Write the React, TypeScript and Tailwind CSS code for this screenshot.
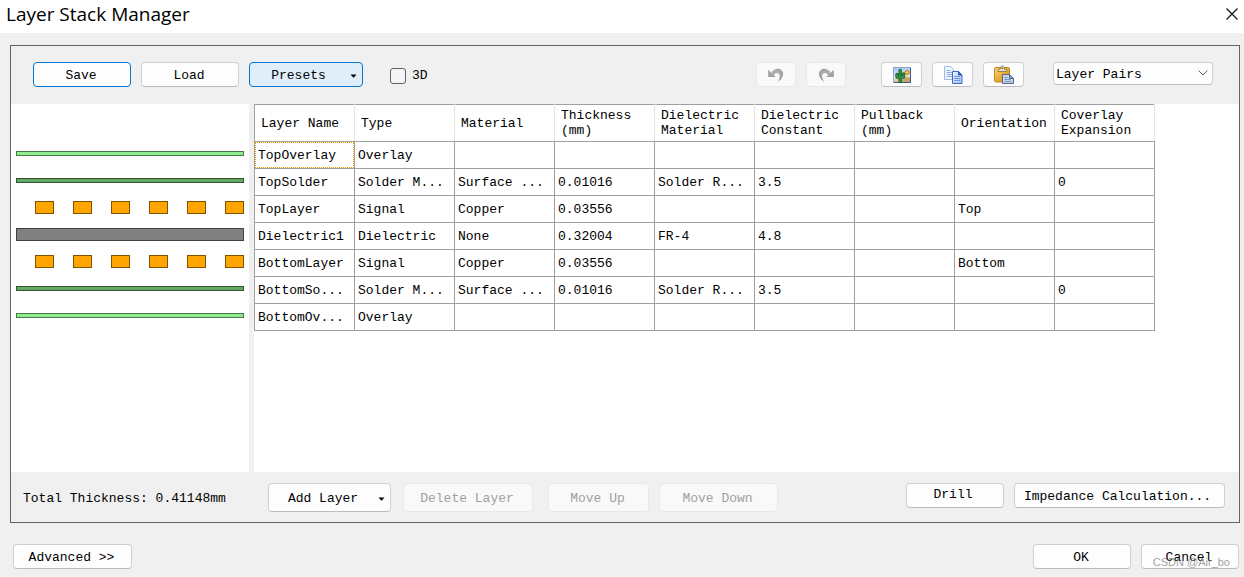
import type { ButtonHTMLAttributes } from 'react';
import { clsx } from 'clsx';

const columns = [
  'Layer Name',
  'Type',
  'Material',
  'Thickness (mm)',
  'Dielectric Material',
  'Dielectric Constant',
  'Pullback (mm)',
  'Orientation',
  'Coverlay Expansion',
];

const layers = [
  { kind: 'overlay', cells: ['TopOverlay', 'Overlay', '', '', '', '', '', '', ''] },
  { kind: 'solder', cells: ['TopSolder', 'Solder M...', 'Surface ...', '0.01016', 'Solder R...', '3.5', '', '', '0'] },
  { kind: 'signal', cells: ['TopLayer', 'Signal', 'Copper', '0.03556', '', '', '', 'Top', ''] },
  { kind: 'dielectric', cells: ['Dielectric1', 'Dielectric', 'None', '0.32004', 'FR-4', '4.8', '', '', ''] },
  { kind: 'signal', cells: ['BottomLayer', 'Signal', 'Copper', '0.03556', '', '', '', 'Bottom', ''] },
  { kind: 'solder', cells: ['BottomSo...', 'Solder M...', 'Surface ...', '0.01016', 'Solder R...', '3.5', '', '', '0'] },
  { kind: 'overlay', cells: ['BottomOv...', 'Overlay', '', '', '', '', '', '', ''] },
];

const tones = {
  plain: 'border-x-[#d0d0d0] border-t-[#d0d0d0] border-b-[#bcbcbc] bg-[#fdfdfd]',
  focused: 'border-[#0078d4] bg-[#fdfdfd]',
  active: 'border-[#0078d4] bg-[#e0eef9]',
  off: 'border-[#e8e8e8] bg-[#f9f9f9] text-[#a0a0a0]',
};

type ButtonProps = ButtonHTMLAttributes<HTMLButtonElement> & { tone?: keyof typeof tones };

function Button({ className, tone = 'plain', ...props }: ButtonProps) {
  return (
    <button
      type="button"
      disabled={tone === 'off'}
      className={clsx('flex shrink-0 items-center justify-center whitespace-nowrap rounded border', tones[tone], className)}
      {...props}
    />
  );
}

function Caret() {
  return (
    <svg className="h-1 w-[7px] shrink-0" viewBox="0 0 7 4" aria-hidden="true">
      <path d="M0.5 0.5h6L3.5 3.8z" fill="#000" />
    </svg>
  );
}

function UndoIcon({ flipped }: { flipped?: boolean }) {
  return (
    <svg className={clsx('h-5 w-5', flipped && '-scale-x-100')} viewBox="0 0 20 20" aria-hidden="true">
      <path d="M2.200 4.800v7.200h7.600z" fill="#a0a0a0" />
      <path
        d="M5 8.800C7.500 5.200 11.500 3.600 14.400 5c3.800 1.900 3.300 7.500-2.700 12.300 2.200-4 2.700-7.300.9-8.700-1.400-1.100-3.400-.5-4.900 1.700z"
        fill="#acacac"
      />
      <path d="M6 7.300c3-3.200 6.700-3.800 9-1.900 2.300 2.300 1.500 6.500-1.300 9.600" fill="none" stroke="#8f8f8f" />
    </svg>
  );
}

function PictureIcon() {
  return (
    <svg className="h-5 w-5" viewBox="0 0 20 20" aria-hidden="true">
      <defs>
        <linearGradient id="sky" x1="0" y1="0" x2="0" y2="1">
          <stop offset="0" stopColor="#a9c9ee" />
          <stop offset="1" stopColor="#f4f9fe" />
        </linearGradient>
      </defs>
      <rect x="1.500" y="2.500" width="17" height="15" fill="url(#sky)" stroke="#8ba7cb" />
      <path d="M2 14.500c3-2 5-1.500 7-1 3-2.500 6-3 9-1.500v5H2z" fill="#e2c894" />
      <path d="M10 14.500c2.500-2 5-2.500 8-1.500v4H9z" fill="#c4a36a" />
      <path d="M18.500 3v14.500H2" fill="none" stroke="#3e5a85" />
      <circle cx="15" cy="7.500" r="2" fill="#ffc431" stroke="#b77914" />
      <path d="M8.200 5.500v11M5 9.500v2.500h6.500V9" fill="none" stroke="#1d6535" strokeWidth="3.400" strokeLinecap="round" strokeLinejoin="round" />
      <path d="M8.200 5.500v11M5 9.500v2.500h6.500V9" fill="none" stroke="#2f8c45" strokeWidth="1.800" strokeLinecap="round" strokeLinejoin="round" />
    </svg>
  );
}

function CopyIcon() {
  return (
    <svg className="h-5 w-5" viewBox="0 0 20 20" aria-hidden="true">
      <defs>
        <linearGradient id="sheet" x1="0" y1="0" x2="1" y2="1">
          <stop offset="0" stopColor="#f0f6ff" />
          <stop offset="1" stopColor="#9dbff2" />
        </linearGradient>
      </defs>
      <path d="M1.500 1.500h6l3 3v10h-9z" fill="#eef4fd" stroke="#a3bbe2" />
      <path d="M3.500 5.500h4M3.500 7.500h6M3.500 9.500h6M3.500 11.500h6" fill="none" stroke="#8fb2e6" />
      <path d="M9.500 6.500h6l3.500 3.500v8.500H9.500z" fill="url(#sheet)" stroke="#3d6bc6" />
      <path d="M15.500 6.500V10H19z" fill="#3d74d8" stroke="#2a55b5" />
      <path d="M11 11.500h6M11 13.500h6M11 15.500h6" fill="none" stroke="#6f9ae4" />
    </svg>
  );
}

function PasteIcon() {
  return (
    <svg className="h-5 w-5" viewBox="0 0 20 20" aria-hidden="true">
      <defs>
        <linearGradient id="board" x1="0" y1="0" x2="1" y2="1">
          <stop offset="0" stopColor="#ffd769" />
          <stop offset="1" stopColor="#cf8410" />
        </linearGradient>
      </defs>
      <rect x="0.500" y="2.500" width="15" height="14.500" rx="1.500" fill="url(#board)" stroke="#c08624" />
      <path d="M4 6.500V4.200h2.200C6.200 2 7 1 8.300 1s2.100 1 2.100 3.200h2.200v2.300z" fill="#e6dfc0" stroke="#8d7d4c" strokeWidth="0.900" />
      <circle cx="8.300" cy="3.200" r="0.900" fill="#85713e" />
      <path d="M8.500 9.500h7l4 4v5h-11z" fill="#c9d6ea" stroke="#55688a" />
      <path d="M15.500 9.500v4h4z" fill="#8fa5c8" stroke="#55688a" />
      <path d="M10.500 12.500h3M10.500 14.500h6M10.500 16.500h7" fill="none" stroke="#7e93b8" />
    </svg>
  );
}

function LayerShape({ kind }: { kind: string }) {
  if (kind === 'signal') {
    return (
      <div className="flex w-full justify-between pl-[19px]">
        {[0, 1, 2, 3, 4, 5].map((n) => (
          <div key={n} className="h-[13px] w-[19px] border border-[#805300] bg-[#ffa500]" />
        ))}
      </div>
    );
  }
  return (
    <div
      className={clsx(
        'w-full border',
        kind === 'overlay' && 'h-[5px] border-[#487748] bg-[#90ee90]',
        kind === 'solder' && 'h-[5px] border-[#335433] bg-[#66a866]',
        kind === 'dielectric' && 'h-[13px] border-[#404040] bg-[#808080]',
      )}
    />
  );
}

function Toolbar() {
  return (
    <div className="flex items-start pb-[14px] pl-[22px] pr-[26px] pt-4">
      <div className="flex gap-[10px]">
        <Button className="h-[25px] w-[98px] pr-[2px] pt-[2px]" tone="focused">
          Save
        </Button>
        <Button className="h-[25px] w-[98px] pr-[2px] pt-[2px]">Load</Button>
        <Button className="h-[25px] w-[114px] gap-6 pl-4 pt-[2px]" tone="active">
          Presets
          <Caret />
        </Button>
      </div>
      <label className="ml-[27px] flex h-7 items-center gap-[6px]">
        <input type="checkbox" className="h-4 w-4 appearance-none rounded-[3px] border border-[#626262] bg-[#f5f5f5] checked:bg-[#0078d4]" />
        3D
      </label>
      <div className="ml-auto flex gap-[10px]">
        <Button className="h-[25px] w-10" tone="off" aria-label="Undo">
          <UndoIcon />
        </Button>
        <Button className="h-[25px] w-10" tone="off" aria-label="Redo">
          <UndoIcon flipped />
        </Button>
      </div>
      <div className="ml-[35px] flex gap-[10px]">
        <Button className="h-[25px] w-[41px]" aria-label="Save as image">
          <PictureIcon />
        </Button>
        <Button className="h-[25px] w-[41px]" aria-label="Copy">
          <CopyIcon />
        </Button>
        <Button className="h-[25px] w-[41px]" aria-label="Paste">
          <PasteIcon />
        </Button>
      </div>
      <div className="relative ml-[29px]">
        <select
          aria-label="Stack style"
          className="h-[23px] w-40 appearance-none rounded-sm border border-x-[#d0d0d0] border-t-[#d0d0d0] border-b-[#bcbcbc] bg-[#fdfdfd] pl-[2px] pr-6 pt-[2px]"
        >
          <option>Layer Pairs</option>
          <option>Internal Layer Pairs</option>
          <option>Build-up</option>
        </select>
        <svg className="pointer-events-none absolute right-[5px] top-2 h-[6px] w-[10px]" viewBox="0 0 10 6" aria-hidden="true">
          <path d="M0.500 0.500L5 5L9.500 0.500" fill="none" stroke="#606060" />
        </svg>
      </div>
    </div>
  );
}

function LayerTable() {
  return (
    <table className="w-[901px] table-fixed border-collapse text-left">
      <thead>
        <tr className="h-[37px]">
          {columns.map((column) => (
            <th
              key={column}
              className="border-x border-y border-x-[#e5e5e5] border-y-[#a0a0a0] p-0 pl-[6px] align-middle font-normal leading-[15px] first:border-l-[#a0a0a0]"
            >
              {column}
            </th>
          ))}
        </tr>
      </thead>
      <tbody>
        {layers.map((layer, row) => (
          <tr key={layer.cells[0]} className="h-[27px]">
            {layer.cells.map((cell, i) => (
              <td key={columns[i]} className="whitespace-nowrap border border-[#a0a0a0] p-0">
                <div
                  className={clsx(
                    'flex h-[26px] items-center border border-dotted pl-[2px] pt-[2px]',
                    row === 0 && i === 0 ? 'border-[#f0a000]' : 'border-transparent',
                  )}
                >
                  {cell}
                </div>
              </td>
            ))}
          </tr>
        ))}
      </tbody>
    </table>
  );
}

export default function App() {
  return (
    <div className="relative flex min-h-screen flex-col bg-[#f0f0f0] font-['Liberation_Mono',monospace] text-[13px] leading-4 text-black">
      <header className="flex h-[33px] items-center justify-between bg-white pb-[6px] pl-[6px] pr-[6px]">
        <h1 className="font-['Open_Sans','Noto_Sans',sans-serif] text-[19px] leading-6">Layer Stack Manager</h1>
        <button type="button" aria-label="Close">
          <svg className="h-3 w-3" viewBox="0 0 12 12" aria-hidden="true">
            <path d="M0.500 0.500l11 11M11.500 0.500l-11 11" stroke="#111" strokeWidth="1.200" />
          </svg>
        </button>
      </header>

      <main className="ml-[10px] mr-1 mt-3 flex grow flex-col border border-[#646464]">
        <Toolbar />
        <div className="flex grow gap-[5px]">
          <div className="w-[238px] shrink-0 bg-white px-[5px] pt-9">
            {layers.map((layer) => (
              <div key={layer.cells[0]} className="flex h-[27px] items-center">
                <LayerShape kind={layer.kind} />
              </div>
            ))}
          </div>
          <div className="grow bg-white">
            <LayerTable />
          </div>
        </div>
        <div className="flex items-start pb-[10px] pl-3 pr-[14px] pt-[11px]">
          <p className="w-[245px] shrink-0 pt-2">Total Thickness: 0.41148mm</p>
          <Button className="h-[29px] w-[123px] gap-5 pl-[14px] pt-[2px]">
            Add Layer
            <Caret />
          </Button>
          <Button className="ml-3 h-[29px] w-[130px] pr-[2px] pt-[2px]" tone="off">
            Delete Layer
          </Button>
          <Button className="ml-[15px] h-[29px] w-[101px] pr-[2px] pt-[2px]" tone="off">
            Move Up
          </Button>
          <Button className="ml-[10px] h-[29px] w-[119px] pr-[2px] pt-[2px]" tone="off">
            Move Down
          </Button>
          <Button className="ml-auto h-[25px] w-[98px] pb-[2px] pr-1">Drill</Button>
          <Button className="ml-[10px] h-[25px] w-[211px] pr-1 pt-[2px]">Impedance Calculation...</Button>
        </div>
      </main>

      <footer className="flex gap-[10px] pb-2 pl-[13px] pr-[5px] pt-[21px]">
        <Button className="h-[25px] w-[119px] pr-[2px] pt-[2px]">Advanced &gt;&gt;</Button>
        <Button className="ml-auto h-[25px] w-[98px] pr-[2px] pt-[2px]">OK</Button>
        <Button className="h-[25px] w-[98px] pr-[2px] pt-[2px]">Cancel</Button>
      </footer>
      <span className="pointer-events-none absolute bottom-[7px] right-[14px] font-['Liberation_Sans',sans-serif] text-[11px] text-[#888888]/80">
        CSDN @Air_bo
      </span>
    </div>
  );
}
